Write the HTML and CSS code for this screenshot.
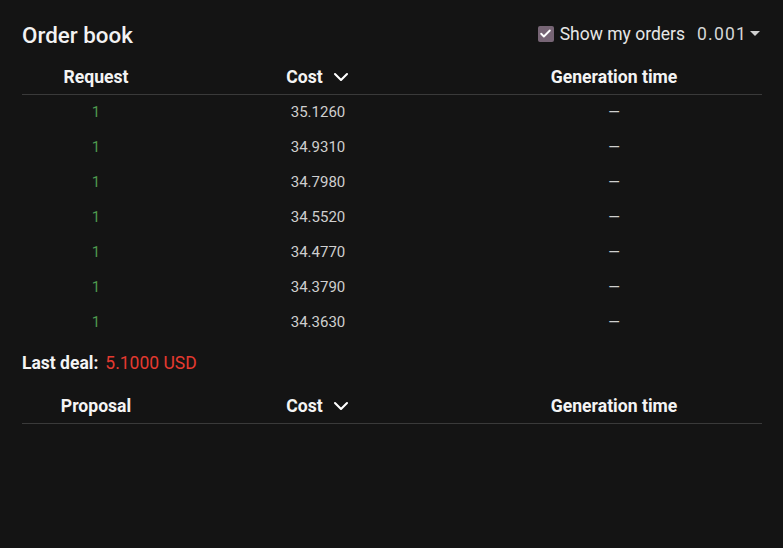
FILE: index.html
```html
<!DOCTYPE html>
<html>
<head>
<meta charset="utf-8">
<link rel="stylesheet" href="styles.css">
</head>
<body>
<div class="panel">
  <div class="top">
    <h1 class="title">Order book</h1>
    <div class="controls">
      <label class="check">
        <span class="box"><svg width="13" height="13" viewBox="0 0 24 24"><path d="M4 12.5l5 5L20 6.5" fill="none" stroke="#fff" stroke-width="3.4" stroke-linecap="round" stroke-linejoin="round"/></svg></span>
        <span class="check-label">Show my orders</span>
      </label>
      <div class="select">
        <span class="select-val">0.001</span>
        <span class="caret"></span>
      </div>
    </div>
  </div>

  <div class="table">
    <div class="thead">
      <div class="th">Request</div>
      <div class="th">Cost <svg class="chev" width="18" height="18" viewBox="0 0 24 24"><path d="M4 8l8 8 8-8" fill="none" stroke="#fff" stroke-width="2.8" stroke-linecap="round" stroke-linejoin="round"/></svg></div>
      <div class="th">Generation time</div>
    </div>
    <div class="tr"><div class="td green">1</div><div class="td">35.1260</div><div class="td">—</div></div>
    <div class="tr"><div class="td green">1</div><div class="td">34.9310</div><div class="td">—</div></div>
    <div class="tr"><div class="td green">1</div><div class="td">34.7980</div><div class="td">—</div></div>
    <div class="tr"><div class="td green">1</div><div class="td">34.5520</div><div class="td">—</div></div>
    <div class="tr"><div class="td green">1</div><div class="td">34.4770</div><div class="td">—</div></div>
    <div class="tr"><div class="td green">1</div><div class="td">34.3790</div><div class="td">—</div></div>
    <div class="tr"><div class="td green">1</div><div class="td">34.3630</div><div class="td">—</div></div>
  </div>

  <div class="last-deal">
    <span class="ld-label">Last deal:</span>
    <span class="ld-value">5.1000 USD</span>
  </div>

  <div class="table">
    <div class="thead">
      <div class="th">Proposal</div>
      <div class="th">Cost <svg class="chev" width="18" height="18" viewBox="0 0 24 24"><path d="M4 8l8 8 8-8" fill="none" stroke="#fff" stroke-width="2.8" stroke-linecap="round" stroke-linejoin="round"/></svg></div>
      <div class="th">Generation time</div>
    </div>
  </div>
</div>
</body>
</html>
```

FILE: styles.css
```css
html, body {
  margin: 0;
  padding: 0;
  background: #141414;
  height: 100%;
}
body {
  font-family: Roboto, "Liberation Sans", sans-serif;
  color: #e6e6e6;
}
.panel {
  padding: 17px 21px 0 22px;
}
.top {
  display: flex;
  align-items: center;
  justify-content: space-between;
  height: 34px;
}
.title {
  margin: 0;
  padding-top: 1px;
  font-size: 22.4px;
  font-weight: 500;
  color: #f2f2f2;
  line-height: 32px;
}
.controls {
  display: flex;
  align-items: center;
  gap: 12px;
  margin-top: -1px;
}
.check {
  display: flex;
  align-items: center;
  gap: 6px;
}
.box {
  width: 16px;
  height: 16px;
  border-radius: 2px;
  background: #776575;
  display: flex;
  align-items: center;
  justify-content: center;
}
.check-label {
  font-size: 17.5px;
  color: #e6e6e6;
}
.select {
  display: flex;
  align-items: center;
  gap: 3px;
}
.select-val {
  font-size: 17.5px;
  letter-spacing: 1.2px;
  color: #d6d6d6;
}
.caret {
  width: 0;
  height: 0;
  border-left: 5px solid transparent;
  border-right: 5px solid transparent;
  border-top: 5px solid #d0d0d0;
  margin-right: 2px;
}
.table {
  display: flex;
  flex-direction: column;
}
.thead, .tr {
  display: grid;
  grid-template-columns: 1fr 2fr 2fr;
}
.thead {
  height: 34px;
  border-bottom: 1px solid #3a3a3a;
  align-items: center;
  margin-top: 9px;
}
.th {
  font-size: 17.6px;
  font-weight: 700;
  color: #f4f4f4;
  text-align: center;
  display: flex;
  align-items: center;
  justify-content: center;
  gap: 9px;
}
.tr {
  height: 35px;
  align-items: center;
}
.td {
  font-size: 15px;
  color: #cfcfcf;
  text-align: center;
  padding-bottom: 2px;
}
.green {
  color: #4e9a4e;
}
.last-deal {
  display: flex;
  align-items: center;
  gap: 7px;
  height: 45px;
  padding-bottom: 4px;
}
.ld-label {
  font-size: 17.5px;
  font-weight: 700;
  color: #f4f4f4;
}
.ld-value {
  font-size: 17.5px;
  color: #e53a30;
}
.last-deal + .table .thead {
  margin-top: 0;
}
```
